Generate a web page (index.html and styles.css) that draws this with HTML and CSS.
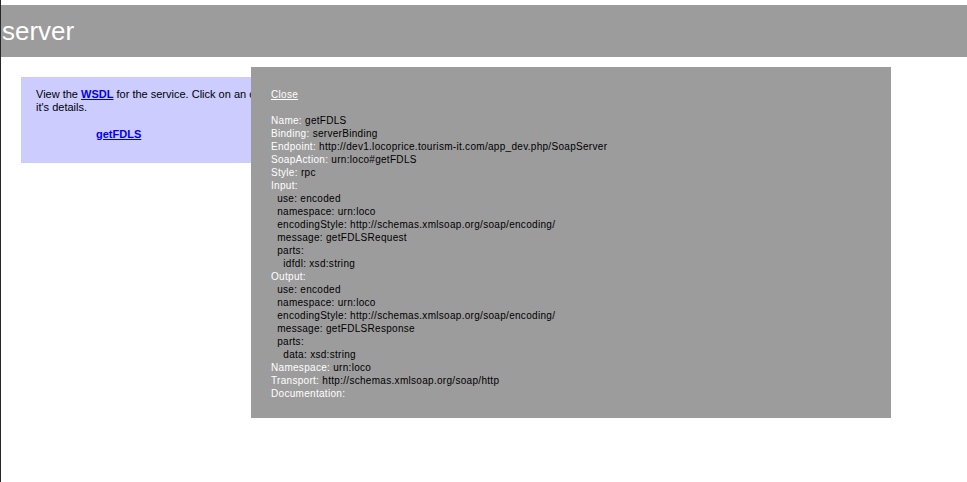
FILE: index.html
```html
<!DOCTYPE html>
<html>
<head>
<meta charset="utf-8">
<title>server</title>
<link rel="stylesheet" href="styles.css">
</head>
<body>
<div class="page">
  <div class="content">
    <div class="title">server</div>
    <div class="nav">
      <p>View the <a href="#">WSDL</a> for the service. Click on an operation name to view it's details.</p>
      <ul>
        <li><a href="#">getFDLS</a></li>
      </ul>
    </div>
  </div>
  <div class="hidden">
    <a class="close" href="#">Close</a><br><br>
    <span class="lbl">Name:</span> getFDLS<br>
    <span class="lbl">Binding:</span> serverBinding<br>
    <span class="lbl">Endpoint:</span> http://dev1.locoprice.tourism-it.com/app_dev.php/SoapServer<br>
    <span class="lbl">SoapAction:</span> urn:loco#getFDLS<br>
    <span class="lbl">Style:</span> rpc<br>
    <span class="lbl">Input:</span><br>
    &nbsp;&nbsp;use: encoded<br>
    &nbsp;&nbsp;namespace: urn:loco<br>
    &nbsp;&nbsp;encodingStyle: http://schemas.xmlsoap.org/soap/encoding/<br>
    &nbsp;&nbsp;message: getFDLSRequest<br>
    &nbsp;&nbsp;parts:<br>
    &nbsp;&nbsp;&nbsp;&nbsp;idfdl: xsd:string<br>
    <span class="lbl">Output:</span><br>
    &nbsp;&nbsp;use: encoded<br>
    &nbsp;&nbsp;namespace: urn:loco<br>
    &nbsp;&nbsp;encodingStyle: http://schemas.xmlsoap.org/soap/encoding/<br>
    &nbsp;&nbsp;message: getFDLSResponse<br>
    &nbsp;&nbsp;parts:<br>
    &nbsp;&nbsp;&nbsp;&nbsp;data: xsd:string<br>
    <span class="lbl">Namespace:</span> urn:loco<br>
    <span class="lbl">Transport:</span> http://schemas.xmlsoap.org/soap/http<br>
    <span class="lbl">Documentation:</span>
  </div>
</div>
</body>
</html>
```

FILE: styles.css
```css
html, body {
  margin: 0;
  padding: 0;
  background: #ffffff;
}
body {
  font-family: "Liberation Sans", Arial, sans-serif;
  color: #000000;
}
.page {
  position: relative;
  min-height: 482px;
  border-left: 1px solid #262626;
  box-sizing: border-box;
  overflow: hidden;
}
.content {
  padding-top: 5px;
}
.title {
  font-size: 26px;
  line-height: 32px;
  color: #ffffff;
  background-color: #9c9c9c;
  padding: 10px 0 10px 1px;
}
.nav {
  margin: 20px 0 0 20px;
  padding: 10px 0 10px 15px;
  width: 332px;
  font-size: 11px;
  line-height: 13px;
  background-color: #ccccff;
  color: #000000;
}
.nav p {
  margin: 1px 0 0 0;
}
.nav ul {
  margin: 14px 0 12px 0;
  padding-left: 60px;
}
.nav li {
  list-style-type: none;
}
a {
  color: #0000ee;
  font-weight: bold;
}
.hidden {
  position: absolute;
  left: 250px;
  top: 67px;
  width: 600px;
  padding: 21px 20px 19px 20px;
  font-size: 10px;
  line-height: 13px;
  letter-spacing: 0.3px;
  background-color: #9c9c9c;
  color: #000000;
  height: 311px;
  overflow: hidden;
}
.hidden .close {
  color: #ffffff;
  font-weight: normal;
}
.lbl {
  color: #ffffff;
}
```
